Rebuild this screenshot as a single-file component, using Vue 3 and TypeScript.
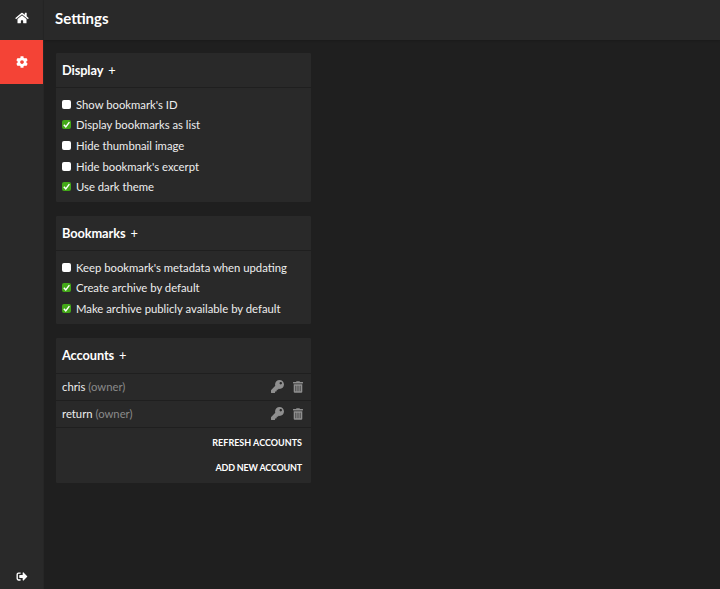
<script setup lang="ts">
interface Opt { label: string; on: boolean }
const display: Opt[] = [
  { label: "Show bookmark's ID", on: false },
  { label: 'Display bookmarks as list', on: true },
  { label: 'Hide thumbnail image', on: false },
  { label: "Hide bookmark's excerpt", on: false },
  { label: 'Use dark theme', on: true },
]
const bookmarks: Opt[] = [
  { label: "Keep bookmark's metadata when updating", on: false },
  { label: 'Create archive by default', on: true },
  { label: 'Make archive publicly available by default', on: true },
]
const groups = [
  { title: 'Display', opts: display },
  { title: 'Bookmarks', opts: bookmarks },
]
const accounts = ['chris', 'return']
</script>

<template>
  <div class="app">
    <nav class="side">
      <a class="nav home">
        <svg class="ico-home" viewBox="0 0 576 512"><path d="M280.37 148.26L96 300.11V464a16 16 0 0 0 16 16l112.06-.29a16 16 0 0 0 15.92-16V368a16 16 0 0 1 16-16h64a16 16 0 0 1 16 16v95.64a16 16 0 0 0 16 16.05L464 480a16 16 0 0 0 16-16V300L295.67 148.26a12.19 12.19 0 0 0-15.3 0zM571.6 251.47L488 182.56V44.05a12 12 0 0 0-12-12h-56a12 12 0 0 0-12 12v72.61L318.47 43a48 48 0 0 0-61 0L4.34 251.47a12 12 0 0 0-1.6 16.9l25.5 31A12 12 0 0 0 45.15 301l235.22-193.74a12.19 12.19 0 0 1 15.3 0L530.9 301a12 12 0 0 0 16.9-1.6l25.5-31a12 12 0 0 0-1.7-16.93z"/></svg>
      </a>
      <a class="nav active">
        <svg class="ico-cog" viewBox="0 0 512 512"><path d="M487.4 315.7l-42.6-24.6c4.3-23.2 4.3-47 0-70.2l42.6-24.6c4.9-2.8 7.1-8.6 5.5-14-11.1-35.6-30-67.8-54.7-94.6-3.8-4.1-10-5.1-14.8-2.3L380.8 110c-17.9-15.4-38.5-27.3-60.8-35.1V25.8c0-5.6-3.9-10.5-9.4-11.7-36.7-8.2-74.3-7.8-109.2 0-5.5 1.2-9.4 6.1-9.4 11.7V75c-22.2 7.9-42.8 19.8-60.8 35.1L88.7 85.5c-4.9-2.8-11-1.9-14.8 2.3-24.7 26.7-43.6 58.9-54.7 94.6-1.7 5.4.6 11.2 5.5 14L67.3 221c-4.3 23.2-4.3 47 0 70.2l-42.6 24.6c-4.9 2.8-7.1 8.6-5.5 14 11.1 35.6 30 67.8 54.7 94.6 3.8 4.1 10 5.1 14.8 2.3l42.6-24.6c17.9 15.4 38.5 27.3 60.8 35.1v49.2c0 5.6 3.9 10.5 9.4 11.7 36.7 8.2 74.3 7.8 109.2 0 5.5-1.2 9.4-6.1 9.4-11.7v-49.2c22.2-7.9 42.8-19.8 60.8-35.1l42.6 24.6c4.9 2.8 11 1.9 14.8-2.3 24.7-26.7 43.6-58.9 54.7-94.6 1.5-5.5-.7-11.3-5.6-14.1zM256 336c-44.1 0-80-35.9-80-80s35.9-80 80-80 80 35.9 80 80-35.9 80-80 80z"/></svg>
      </a>
      <a class="nav logout">
        <svg class="ico-out" viewBox="0 0 512 512"><path d="M497 273L329 441c-15 15-41 4.5-41-17v-96H152c-13.3 0-24-10.7-24-24v-96c0-13.3 10.7-24 24-24h136V88c0-21.4 25.9-32 41-17l168 168c9.3 9.4 9.3 24.6 0 34zM192 436v-40c0-6.6-5.4-12-12-12H96c-17.7 0-32-14.3-32-32V160c0-17.7 14.3-32 32-32h84c6.6 0 12-5.4 12-12V76c0-6.6-5.4-12-12-12H96c-53 0-96 43-96 96v192c0 53 43 96 96 96h84c6.6 0 12-5.4 12-12z"/></svg>
      </a>
    </nav>
    <div class="main">
      <header class="top"><h1>Settings</h1></header>
      <section class="content">
        <div v-for="g in groups" :key="g.title" class="panel">
          <div class="head"><span>{{ g.title }}</span><span class="plus">+</span></div>
          <div class="opts">
            <label v-for="o in g.opts" :key="o.label" class="opt">
              <span class="box" :class="{ on: o.on }">
                <svg v-if="o.on" viewBox="0 0 10 10"><path d="M2 5.4 4.2 7.6 8.2 2.4" /></svg>
              </span>
              <span>{{ o.label }}</span>
            </label>
          </div>
        </div>
        <div class="panel">
          <div class="head head-acct"><span>Accounts</span><span class="plus">+</span></div>
          <div v-for="a in accounts" :key="a" class="acct">
            <span class="name">{{ a }} <span class="role">(owner)</span></span>
            <svg class="ico-key" viewBox="0 0 512 512"><path d="M512 176.001C512 273.203 433.202 352 336 352c-11.22 0-22.19-1.062-32.827-3.069l-24.012 27.014A23.999 23.999 0 0 1 261.223 384H224v40c0 13.255-10.745 24-24 24h-40v40c0 13.255-10.745 24-24 24H24c-13.255 0-24-10.745-24-24v-78.059c0-6.365 2.529-12.47 7.029-16.971l161.802-161.802C163.108 213.814 160 195.271 160 176 160 78.798 238.797.001 335.999 0 433.488-.001 512 78.511 512 176.001zM336 128c0 26.51 21.49 48 48 48s48-21.49 48-48-21.49-48-48-48-48 21.49-48 48z"/></svg>
            <svg class="ico-trash" viewBox="0 0 448 512"><path d="M32 464a48 48 0 0 0 48 48h288a48 48 0 0 0 48-48V128H32zm272-256a16 16 0 0 1 32 0v224a16 16 0 0 1-32 0zm-96 0a16 16 0 0 1 32 0v224a16 16 0 0 1-32 0zm-96 0a16 16 0 0 1 32 0v224a16 16 0 0 1-32 0zM432 32H312l-9.4-18.7A24 24 0 0 0 281.1 0H166.8a23.72 23.72 0 0 0-21.4 13.3L136 32H16A16 16 0 0 0 0 48v32a16 16 0 0 0 16 16h416a16 16 0 0 0 16-16V48a16 16 0 0 0-16-16z"/></svg>
          </div>
          <div class="actions">
            <a>REFRESH ACCOUNTS</a>
            <a class="add">ADD NEW ACCOUNT</a>
          </div>
        </div>
      </section>
    </div>
  </div>
</template>

<style>
html, body { margin: 0; background: #1f1f1f; }
</style>

<style scoped>
.app {
  display: flex;
  height: 589px;
  width: 720px;
  overflow: hidden;
  background: #1f1f1f;
  color: #fff;
  font-family: Lato, sans-serif;
  font-size: 11.3px;
}
.side {
  width: 43px;
  flex: none;
  display: flex;
  flex-direction: column;
  background: #292929;
  border-right: 1px solid #262626;
}
.nav {
  height: 44px;
  display: flex;
  align-items: center;
  justify-content: center;
}
.home { height: 40px; }
.active { background: #f44336; }
.logout { margin-top: auto; height: 25px; align-items: flex-start; }
.side svg { fill: #fff; display: block; }
.ico-home { width: 14px; height: 12px; margin-top: -4px; }
.ico-cog { width: 12px; height: 12px; margin-top: -1px; }
.ico-out { width: 12px; height: 11px; margin-top: 7px; }
.main { flex: 1; min-width: 0; display: flex; flex-direction: column; }
.top {
  height: 40px;
  flex: none;
  background: #292929;
  display: flex;
  align-items: center;
  padding-left: 11px;
  box-shadow: 0 1px 2px rgba(0,0,0,.15);
}
.top h1 { margin: -4px 0 0; font-size: 15px; font-weight: 700; }
.content {
  padding: 13px 0 0 12px;
  display: flex;
  flex-direction: column;
  gap: 14px;
}
.panel {
  width: 255px;
  background: #292929;
  border-radius: 1px;
}
.head {
  height: 34px;
  display: flex;
  align-items: center;
  gap: 5px;
  padding-left: 6px;
  font-size: 12.8px;
  font-weight: 700;
  letter-spacing: -0.1px;
  border-bottom: 1px solid #1f1f1f;
}
.head-acct { height: 35px; }
.plus { font-weight: 400; }
.opts { padding: 6px 6px 5px; }
.opt {
  height: 20.6px;
  display: flex;
  align-items: center;
  gap: 5px;
  color: #eee;
  white-space: nowrap;
}
.box {
  width: 9px;
  height: 9px;
  background: #fff;
  border-radius: 2px;
  flex: none;
  display: block;
}
.box.on { background: #43a818; }
.box svg { width: 9px; height: 9px; display: block; }
.box path { fill: none; stroke: #fff; stroke-width: 1.6; }
.acct {
  height: 26px;
  display: flex;
  align-items: center;
  padding: 0 8px 0 6px;
  border-bottom: 1px solid #1f1f1f;
}
.name { flex: 1; color: #eee; }
.role { color: #8a8a8a; }
.ico-key { width: 13px; height: 13px; fill: #8f8f8f; margin-right: 9px; }
.ico-trash { width: 10px; height: 12px; fill: #8f8f8f; }
.actions {
  padding: 2px 9px 3px 0;
  display: flex;
  flex-direction: column;
  align-items: flex-end;
}
.actions a {
  height: 25px;
  line-height: 25px;
  font-size: 9px;
  font-weight: 700;
}
.actions .add { letter-spacing: -0.2px; }
</style>
